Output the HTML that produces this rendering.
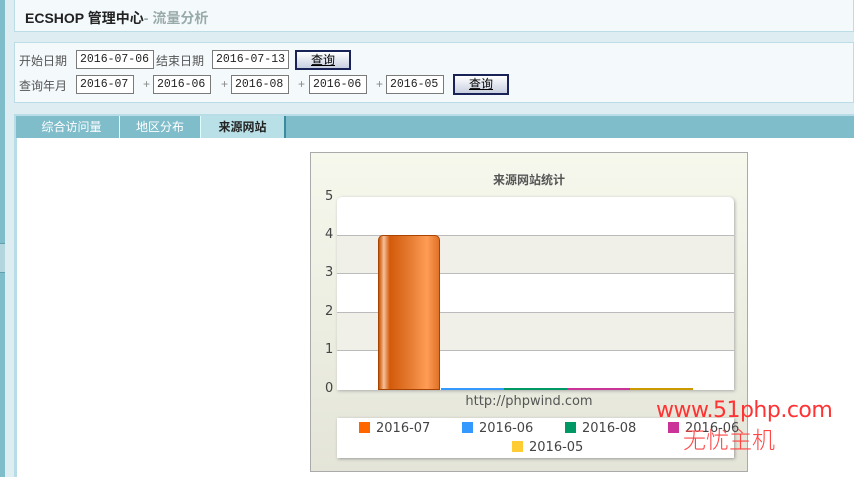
<!DOCTYPE html>
<html><head><meta charset="utf-8"><style>
*{margin:0;padding:0;box-sizing:border-box}
body{width:854px;height:477px;overflow:hidden;background:#ddedf1;font-family:"Liberation Sans","Noto Sans CJK SC",sans-serif;font-size:12px;position:relative;color:#333}
.a{position:absolute}
.inp{position:absolute;height:19px;border:1px solid #7a7a7a;background:#fff;font-family:"Liberation Mono","DejaVu Sans Mono",monospace;font-size:11.5px;line-height:17px;padding-left:3px;color:#222;white-space:nowrap;overflow:hidden}
.btn{position:absolute;height:20px;border:2px solid #1a2358;background:linear-gradient(#fff,#c8cfe0);font-size:12px;text-align:center;line-height:16px;text-decoration:underline;color:#000}
.lbl{position:absolute;color:#555;font-size:12px}
.gl{position:absolute;left:0;width:397px;height:1px;background:#bbb}
.yl{position:absolute;left:14px;font-size:13px;color:#444;font-family:"DejaVu Sans",sans-serif}
.lg{position:absolute;font-size:13px;color:#444;font-family:"DejaVu Sans",sans-serif}
.sw{display:inline-block;width:11px;height:11px;vertical-align:-1px;margin-right:6px}
</style></head><body>
<div class="a" style="left:0;top:0;width:5px;height:477px;background:#80bdcb"></div>
<div class="a" style="left:0;top:243px;width:5px;height:30px;background:#b2d5de;border-top:1px solid #5f9fb0;border-bottom:1px solid #5f9fb0"></div>
<div class="a" style="left:14px;top:0;width:840px;height:32px;background:#f4f9fb;border:1px solid #bcdde6;border-top:none"></div>
<div class="a" style="left:25px;top:8px;font-size:14px;font-weight:bold;color:#222">ECSHOP 管理中心<span style="color:#9aa;font-weight:bold">- 流量分析</span></div>
<div class="a" style="left:14px;top:42px;width:840px;height:61px;background:#f4f9fb;border:1px solid #bcdde6"></div>
<div class="lbl" style="left:19px;top:52px">开始日期</div>
<div class="inp" style="left:76px;top:50px;width:78px">2016-07-06</div>
<div class="lbl" style="left:156px;top:52px">结束日期</div>
<div class="inp" style="left:212px;top:50px;width:77px">2016-07-13</div>
<div class="btn" style="left:295px;top:50px;width:56px">查询</div>
<div class="lbl" style="left:19px;top:77px">查询年月</div>
<div class="inp" style="left:76px;top:75px;width:58px">2016-07</div>
<div class="lbl" style="left:143px;top:77px;color:#888">+</div>
<div class="inp" style="left:153px;top:75px;width:58px">2016-06</div>
<div class="lbl" style="left:221px;top:77px;color:#888">+</div>
<div class="inp" style="left:231px;top:75px;width:58px">2016-08</div>
<div class="lbl" style="left:298px;top:77px;color:#888">+</div>
<div class="inp" style="left:309px;top:75px;width:58px">2016-06</div>
<div class="lbl" style="left:376px;top:77px;color:#888">+</div>
<div class="inp" style="left:386px;top:75px;width:58px">2016-05</div>
<div class="btn" style="left:453px;top:74px;width:56px;height:21px">查询</div>
<div class="a" style="left:14px;top:114px;width:840px;height:363px;background:#b9dde6"></div>
<div class="a" style="left:16px;top:116px;width:838px;height:22px;background:#80bdcb"></div>
<div class="a" style="left:22px;top:116px;width:99px;height:22px;color:#fff;text-align:center;line-height:22px">综合访问量</div>
<div class="a" style="left:119px;top:116px;width:1px;height:22px;background:#dff"></div>
<div class="a" style="left:120px;top:116px;width:80px;height:22px;color:#fff;text-align:center;line-height:22px">地区分布</div>
<div class="a" style="left:200px;top:116px;width:1px;height:22px;background:#dff"></div>
<div class="a" style="left:201px;top:116px;width:85px;height:22px;background:#b9dfe7;color:#222;font-weight:bold;text-align:center;line-height:22px;border-right:2px solid #3a8aa0">来源网站</div>
<div class="a" style="left:17px;top:138px;width:837px;height:339px;background:#fff"></div>
<div class="a" style="left:310px;top:152px;width:438px;height:320px;border:1px solid #aaa;background:linear-gradient(#f6f8ed,#e4e5d8)">
 <div class="a" style="left:0;top:18px;width:436px;text-align:center;font-weight:bold;font-size:12px;color:#555">来源网站统计</div>
 <div class="a" style="left:26px;top:44px;width:397px;height:193px;background:#fff;border-radius:5px 5px 0 0;box-shadow:1px 1px 3px #aaa">
  <div class="a" style="left:0;top:38px;width:397px;height:38px;background:#f0f0e8"></div>
  <div class="a" style="left:0;top:115px;width:397px;height:38px;background:#f0f0e8"></div>
  <div class="gl" style="top:38px"></div><div class="gl" style="top:76px"></div><div class="gl" style="top:115px"></div><div class="gl" style="top:153px"></div>
  <div class="a" style="left:41px;top:38px;width:62px;height:155px;border:1px solid #a84300;border-radius:5px 5px 0 0;background:linear-gradient(90deg,#c85400 0%,#f7c09a 8%,#d35a0a 18%,#e47a30 50%,#ff9c55 80%,#e07228 100%)"></div>
  <div class="a" style="left:104px;top:191px;width:63px;height:2px;background:#39f"></div>
  <div class="a" style="left:167px;top:191px;width:63px;height:2px;background:#096"></div>
  <div class="a" style="left:230px;top:191px;width:63px;height:2px;background:#c39"></div>
  <div class="a" style="left:293px;top:191px;width:63px;height:2px;background:#c90"></div>
 </div>
 <div class="yl" style="top:36px">5</div><div class="yl" style="top:74px">4</div><div class="yl" style="top:112px">3</div><div class="yl" style="top:151px">2</div><div class="yl" style="top:189px">1</div><div class="yl" style="top:228px">0</div>
 <div class="lg" style="left:0;top:241px;width:436px;text-align:center;color:#555">http://phpwind.com</div>
 <div class="a" style="left:26px;top:265px;width:397px;height:40px;background:#fff;box-shadow:1px 1px 3px #999"></div>
 <div class="lg" style="left:48px;top:268px"><span class="sw" style="background:#f60"></span>2016-07</div>
 <div class="lg" style="left:151px;top:268px"><span class="sw" style="background:#39f"></span>2016-06</div>
 <div class="lg" style="left:254px;top:268px"><span class="sw" style="background:#096"></span>2016-08</div>
 <div class="lg" style="left:357px;top:268px"><span class="sw" style="background:#c39"></span>2016-06</div>
 <div class="lg" style="left:201px;top:287px"><span class="sw" style="background:#fc3"></span>2016-05</div>
</div>
<div class="a" style="left:656px;top:398px;font-size:22px;color:#f33;font-family:'DejaVu Sans',sans-serif;letter-spacing:-0.5px">www.51php.com</div>
<div class="a" style="left:683px;top:421px;font-size:23px;color:#f44;font-family:'Noto Sans CJK SC',sans-serif;font-weight:300">无忧主机</div>
</body></html>
